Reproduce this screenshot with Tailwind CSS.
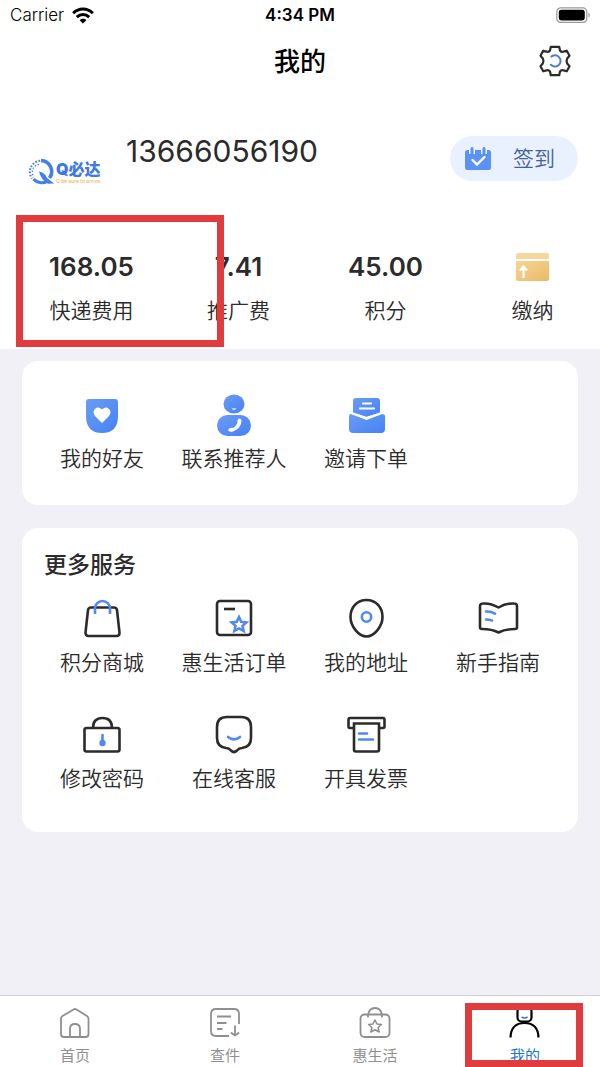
<!DOCTYPE html>
<html lang="zh-CN">
<head>
<meta charset="utf-8">
<meta name="viewport" content="width=device-width, initial-scale=1">
<title>我的</title>
<script src="https://cdn.jsdelivr.net/npm/@tailwindcss/browser@4"></script>
</head>
<body class="min-h-screen flex flex-col overflow-x-hidden bg-[#f1f0f6] text-[#2b2b2b] font-['Inter','Noto_Sans_CJK_SC',sans-serif]">

<header class="bg-white text-black">
  <div class="grid grid-cols-3 items-center h-[30px] px-2.5 text-[17px] leading-[30px]">
    <div class="flex items-center gap-2 font-[350]">
      <span>Carrier</span>
      <svg class="w-[22px] h-[17px]" viewBox="0 0 22 17" fill="none" stroke="#000" stroke-width="3"><path d="M1.2 6.2C6.8.6 15.2.6 20.8 6.2"/><path d="M4.8 10.1c3.6-3.5 8.8-3.5 12.4 0"/><path d="M11 16.6 7.6 13.2c2-1.9 4.800-1.900 6.800 0Z" fill="#000" stroke="none"/></svg>
    </div>
    <span class="text-center font-semibold">4:34 PM</span>
    <svg class="justify-self-end w-[34px] h-[16px]" viewBox="0 0 34 16"><rect x=".8" y=".8" width="30" height="14.600" rx="4" fill="#fff" stroke="#9a9a9a" stroke-width="1.200"/><rect x="2.800" y="2.800" width="26" height="10.600" rx="2.400"/><path d="M32.500 5.500c1.500.8 1.500 4.400 0 5.200Z" fill="#888"/></svg>
  </div>
  <div class="grid grid-cols-[1fr_auto_1fr] items-center h-[62px] px-7">
    <h1 class="col-start-2 text-[26px] font-medium">我的</h1>
    <button type="button" aria-label="设置" class="justify-self-end">
      <svg class="w-[34px] h-[34px]" viewBox="-17 -17 34 34" fill="none"><path d="M-4.200-14.200H4.200L5-10.500Q6.500-8.500 8.600-9.400L11.800-10.300 14.500-5.200 12.200-2.600Q10.800 0 12.200 2.600L14.500 5.200 11.800 10.300 8.600 9.400Q6.500 8.500 5 10.500L4.200 14.200H-4.200L-5 10.500Q-6.500 8.500-8.600 9.400L-11.800 10.300-14.500 5.200-12.200 2.600Q-10.800 0-12.200-2.600L-14.500-5.200-11.800-10.300-8.600-9.400Q-6.500-8.500-5-10.500Z" stroke="#2b2b2b" stroke-width="2.200" stroke-linejoin="round"/><path d="M-4.200-3.800A5.600 5.600 0 1 1-4.600 3.200" stroke="#4a7fd6" stroke-width="2"/></svg>
    </button>
  </div>
</header>

<section class="relative bg-white h-[257px]">
  <div class="flex items-start pt-10 pl-7 pr-[22px]">
    <div class="flex items-center w-[76px] mt-[26px] text-[#3f78e6]">
      <svg class="w-[26px] h-[28px] shrink-0" viewBox="0 0 26 28" fill="none" stroke="#4580ea"><path d="M13 2.500A11 11 0 0 1 21.500 20" stroke-width="3.600"/><path d="M21 22A11 11 0 0 1 5.500 21" stroke-width="3"/><path d="M11 13.500Q17 14.500 19 20L26 25.500 20 25.800Q13 22 11 13.500Z" fill="#4580ea" stroke="none"/><path d="M12 2.800A11.200 11.200 0 0 0 4 20.500" stroke-width="2" stroke-dasharray="1.600 1.600"/><path d="M11 6.200A8 8 0 0 0 6 19" stroke-width="1.400" stroke-dasharray="1.400 1.800"/></svg>
      <div class="flex flex-col pl-0.5 whitespace-nowrap">
        <span class="text-[16px] leading-[18px] font-black">Q必达</span>
        <span class="text-[5px] leading-[7px] font-medium text-[#efb45c]">Q be sure to arrive</span>
      </div>
    </div>
    <p class="ml-[22px] text-[30px] leading-[38px]">13666056190</p>
    <button type="button" class="ml-auto mt-1 flex items-center h-[45px] w-[128px] rounded-full bg-[#eaf1fe] pl-3.5 gap-[21px] text-[21px] text-[#41629f] font-[350]">
      <svg class="w-7 h-[26px]" viewBox="0 0 28 26"><rect x="1" y="4" width="26" height="20" rx="2.500" fill="#5b92f5"/><path d="M8 1v7M20 1v7" stroke="#eaf1fe" stroke-width="6"/><path d="M8 2.500v5M20 2.500v5" stroke="#5b92f5" stroke-width="3" stroke-linecap="round"/><path d="m8.500 14 4.500 4.500 7.500-7.500" fill="none" stroke="#fff" stroke-width="2.400" stroke-linecap="round"/></svg>
      <span>签到</span>
    </button>
  </div>
  <div class="absolute top-[157px] left-[18px] -right-1.5 grid grid-cols-4 text-center text-[21px] leading-8 font-[350]">
    <a href="#" class="flex flex-col gap-2.5"><strong class="text-[26px] leading-9 font-semibold">168.05</strong><span>快递费用</span></a>
    <a href="#" class="flex flex-col gap-2.5"><strong class="text-[26px] leading-9 font-semibold">7.41</strong><span>推广费</span></a>
    <a href="#" class="flex flex-col gap-2.5"><strong class="text-[26px] leading-9 font-semibold">45.00</strong><span>积分</span></a>
    <a href="#" class="flex flex-col gap-2.5 items-center">
      <svg class="w-9 h-9" viewBox="0 0 36 36"><defs><linearGradient id="gold" x2="1" y2="1"><stop stop-color="#f6d595"/><stop offset="1" stop-color="#eaba68"/></linearGradient></defs><path d="M1 10V6q0-2 2-2H32q2 0 2 2v4Z" fill="#f7d79b"/><path d="M1 12H34V30q0 2-2 2H3q-2 0-2-2Z" fill="url(#gold)"/><path d="M8.500 29V18M5 21.500l3.500-3.800 3.500 3.800" fill="none" stroke="#fff" stroke-width="2.200"/></svg>
      <span>缴纳</span>
    </a>
  </div>
  <div class="absolute left-4 top-[123px] w-[208px] h-[132px] border-[7px] border-[#e23b3e] pointer-events-none"></div>
</section>

<main class="flex flex-col gap-[23px] px-[22px] pt-3 pb-6 text-[21px] leading-8 font-[350]">
  <section class="bg-white rounded-2xl h-[144px] px-3.5 pt-8">
    <div class="grid grid-cols-4">
      <a href="#" class="flex flex-col items-center gap-1.5">
        <svg class="w-11 h-11" viewBox="0 0 44 44"><defs><linearGradient id="blue" x2="1" y2="1"><stop stop-color="#6b9cf3"/><stop offset=".5" stop-color="#598ff5"/><stop offset="1" stop-color="#4582f6"/></linearGradient></defs><path d="M9 6H35q3 0 3 3V23Q38 40 22 40T6 23V9q0-3 3-3Z" fill="url(#blue)"/><path d="M22 30 15 23Q12 19 15 16T22 16.500Q26 13 29 16T29 23Z" fill="#fff"/></svg>
        <span>我的好友</span></a>
      <a href="#" class="flex flex-col items-center gap-1.5">
        <svg class="w-11 h-11" viewBox="0 0 44 44"><ellipse cx="22" cy="11" rx="10.500" ry="9.500" fill="url(#blue)"/><path d="M19.500 15.500q2.500 2.500 5 0Z" fill="#fff"/><rect x="5" y="22" width="34" height="21" rx="10.500" fill="url(#blue)"/><path d="M27 25.500q2 0 2.500 1.500 0 8-8 11.200-3 1.200-5-.2-.8-2 1.200-2.800 2-.6 3.300-.2 3.500-1.800 4.500-5.500-.8-2.500 1.500-4Z" fill="#fff"/></svg>
        <span>联系推荐人</span></a>
      <a href="#" class="flex flex-col items-center gap-1.5">
        <svg class="w-11 h-11" viewBox="0 0 44 44"><path d="M12 5H33q3 0 3 3V20L22.500 24 9 20V8q0-3 3-3Z" fill="url(#blue)"/><path d="M5 23q0-2 2-2L22.500 27 38 21q3 0 3 2V36q0 4-4 4H9q-4 0-4-4Z" fill="url(#blue)"/><path d="m6 19.500 16.500 5.500L39 19.500" fill="none" stroke="#fff" stroke-width="2"/><path d="M19 10.500h8M16 15.500h14" stroke="#fff" stroke-width="2.200" stroke-linecap="round"/></svg>
        <span>邀请下单</span></a>
    </div>
  </section>

  <section class="bg-white rounded-2xl h-[304px] px-3.5 pt-[19px]">
    <h2 class="pl-2 text-[23px] leading-9 font-medium">更多服务</h2>
    <div class="grid grid-cols-4 gap-y-[34px] pt-3.5">
      <a href="#" class="flex flex-col items-center gap-1.5">
        <svg class="w-11 h-11" viewBox="0 0 44 44" fill="none" stroke="#2b2b2b" stroke-width="2.600"><path d="M11 10.500H34q2.500 0 3 2.500l2.500 22.500q.2 3.500-3 3.500H8.500q-3 0-3-3.500L8 13q.5-2.500 3-2.500Z"/><path d="M15 17V11.500a7.500 7.500 0 0 1 15 0V17" stroke="#4f8af2"/></svg>
        <span>积分商城</span></a>
      <a href="#" class="flex flex-col items-center gap-1.5">
        <svg class="w-11 h-11" viewBox="0 0 44 44" fill="none" stroke="#2b2b2b" stroke-width="2.600"><rect x="5" y="4" width="34" height="34" rx="3"/><path d="M12 12h11"/><path d="m27 20 2.200 4.800 5.200.6-3.900 3.500 1.100 5.100-4.600-2.600-4.600 2.600 1.100-5.100-3.900-3.500 5.200-.6Z" stroke="#4f8af2"/></svg>
        <span>惠生活订单</span></a>
      <a href="#" class="flex flex-col items-center gap-1.5">
        <svg class="w-11 h-11" viewBox="0 0 44 44" fill="none" stroke="#2b2b2b" stroke-width="2.600"><path d="M22.500 3C32 3 38.500 10.500 38.500 20S30 39.500 22.500 39.500 6.500 29.500 6.500 20 13 3 22.500 3Z"/><circle cx="22.500" cy="20" r="4.700" stroke="#4f8af2"/></svg>
        <span>我的地址</span></a>
      <a href="#" class="flex flex-col items-center gap-1.5">
        <svg class="w-11 h-11" viewBox="0 0 44 44" fill="none" stroke="#2b2b2b" stroke-width="2.600" stroke-linejoin="round"><path d="M22.500 10.500Q15 6 7 6.500 4 6.500 4 9V30.500Q4 32 6 32 16 32 22.500 35.500 29 32 39 32 41 32 41 30.500V9Q41 6.500 38 6.500 30 6 22.500 10.500Z"/><path d="M10 14.500q5-.2 9 2.200M10 22.500q3 0 6 1" stroke="#4f8af2" stroke-linecap="round"/></svg>
        <span>新手指南</span></a>
      <a href="#" class="flex flex-col items-center gap-1.5">
        <svg class="w-11 h-11" viewBox="0 0 44 44" fill="none" stroke="#2b2b2b" stroke-width="2.600"><rect x="4.500" y="15" width="35" height="23.500" rx="2"/><path d="M13 15Q13 5 22.500 5T32 15"/><path d="M22.500 22v8" stroke="#4f8af2" stroke-linecap="round"/><circle cx="22.500" cy="30" r="3.200" fill="#4f8af2" stroke="none"/></svg>
        <span>修改密码</span></a>
      <a href="#" class="flex flex-col items-center gap-1.5">
        <svg class="w-11 h-11" viewBox="0 0 44 44" fill="none" stroke="#2b2b2b" stroke-width="2.600" stroke-linejoin="round"><path d="M15 4H29Q39 4 39 14V25Q39 34 30 35 27 35.200 25 37.500 22 40.500 19 37.500 17 35.200 14 35 5 34 5 25V14Q5 4 15 4Z"/><path d="M16 24q6 4.800 12 0" stroke="#4f8af2" stroke-linecap="round"/></svg>
        <span>在线客服</span></a>
      <a href="#" class="flex flex-col items-center gap-1.5">
        <svg class="w-11 h-11" viewBox="0 0 44 44" fill="none" stroke="#2b2b2b" stroke-width="2.600"><path d="M10 15H6q-1.500 0-1.500-1.500V7Q4.500 5 6 5H39q1.500 0 1.500 2v6.500q0 1.500-1.500 1.500H35"/><path d="M10 10.500H35V36.500q0 2-2 2H12q-2 0-2-2Z"/><path d="M15 20.500h8M15 26.500h14" stroke="#4f8af2" stroke-linecap="round"/></svg>
        <span>开具发票</span></a>
    </div>
  </section>
</main>

<nav class="relative mt-auto h-[72px] grid grid-cols-4 bg-white border-t border-[#cfced6] text-[15px] text-[#8f8f8f] pt-2.5">
  <a href="#" class="flex flex-col items-center gap-1">
    <svg class="w-9 h-9" viewBox="0 0 36 36" fill="none" stroke="#8f8f8f" stroke-width="1.800"><path d="M16.500 3.500q1.500-1 3 0L30 10q1.500 1 1.500 3V28q0 3-3 3H7q-3 0-3-3V13q0-2 1.500-3Z"/><path d="M13 31V23q0-5 5-5t5 5v8"/></svg>
    <span class="leading-5">首页</span></a>
  <a href="#" class="flex flex-col items-center gap-1">
    <svg class="w-9 h-9" viewBox="0 0 36 36" fill="none" stroke="#8f8f8f" stroke-width="1.800"><path d="M22 30H9q-5 0-5-5V8q0-5 5-5H27q5 0 5 5V18"/><path d="M10 10.500H24M10 17H19.500M10 23h5.500M28 19.500V29M24 26.500q1 1 4 3 3-2 4-3"/></svg>
    <span class="leading-5">查件</span></a>
  <a href="#" class="flex flex-col items-center gap-1">
    <svg class="w-9 h-9" viewBox="0 0 36 36" fill="none" stroke="#8f8f8f" stroke-width="1.800"><rect x="3.500" y="8.500" width="29" height="22.500" rx="4"/><path d="M11 11.500V9Q12 2 18 2t7 7v2.500"/><path d="m18 14 2 4 4.400.5-3.300 3 1 4.500-4.100-2.300-4.100 2.300 1-4.500-3.300-3 4.400-.5Z" stroke-width="1.600" stroke-linejoin="round"/></svg>
    <span class="leading-5">惠生活</span></a>
  <a href="#" aria-current="page" class="flex flex-col items-center gap-1 text-[#1a78d2]">
    <svg class="w-9 h-9" viewBox="0 0 36 36" fill="none" stroke="#000" stroke-width="2.200"><rect x="10.500" y="1" width="14" height="14.500" rx="4"/><path d="M3.500 31.500Q4 17 17.500 17T31.500 31.500"/><path d="M14.500 11q3 2 6 0" stroke="#4a6fd8" stroke-width="1.600"/></svg>
    <span class="leading-5">我的</span></a>
  <div class="absolute right-[17px] top-[7px] w-[118px] h-16 border-[7px] border-[#e23b3e] pointer-events-none"></div>
</nav>
</body>
</html>
